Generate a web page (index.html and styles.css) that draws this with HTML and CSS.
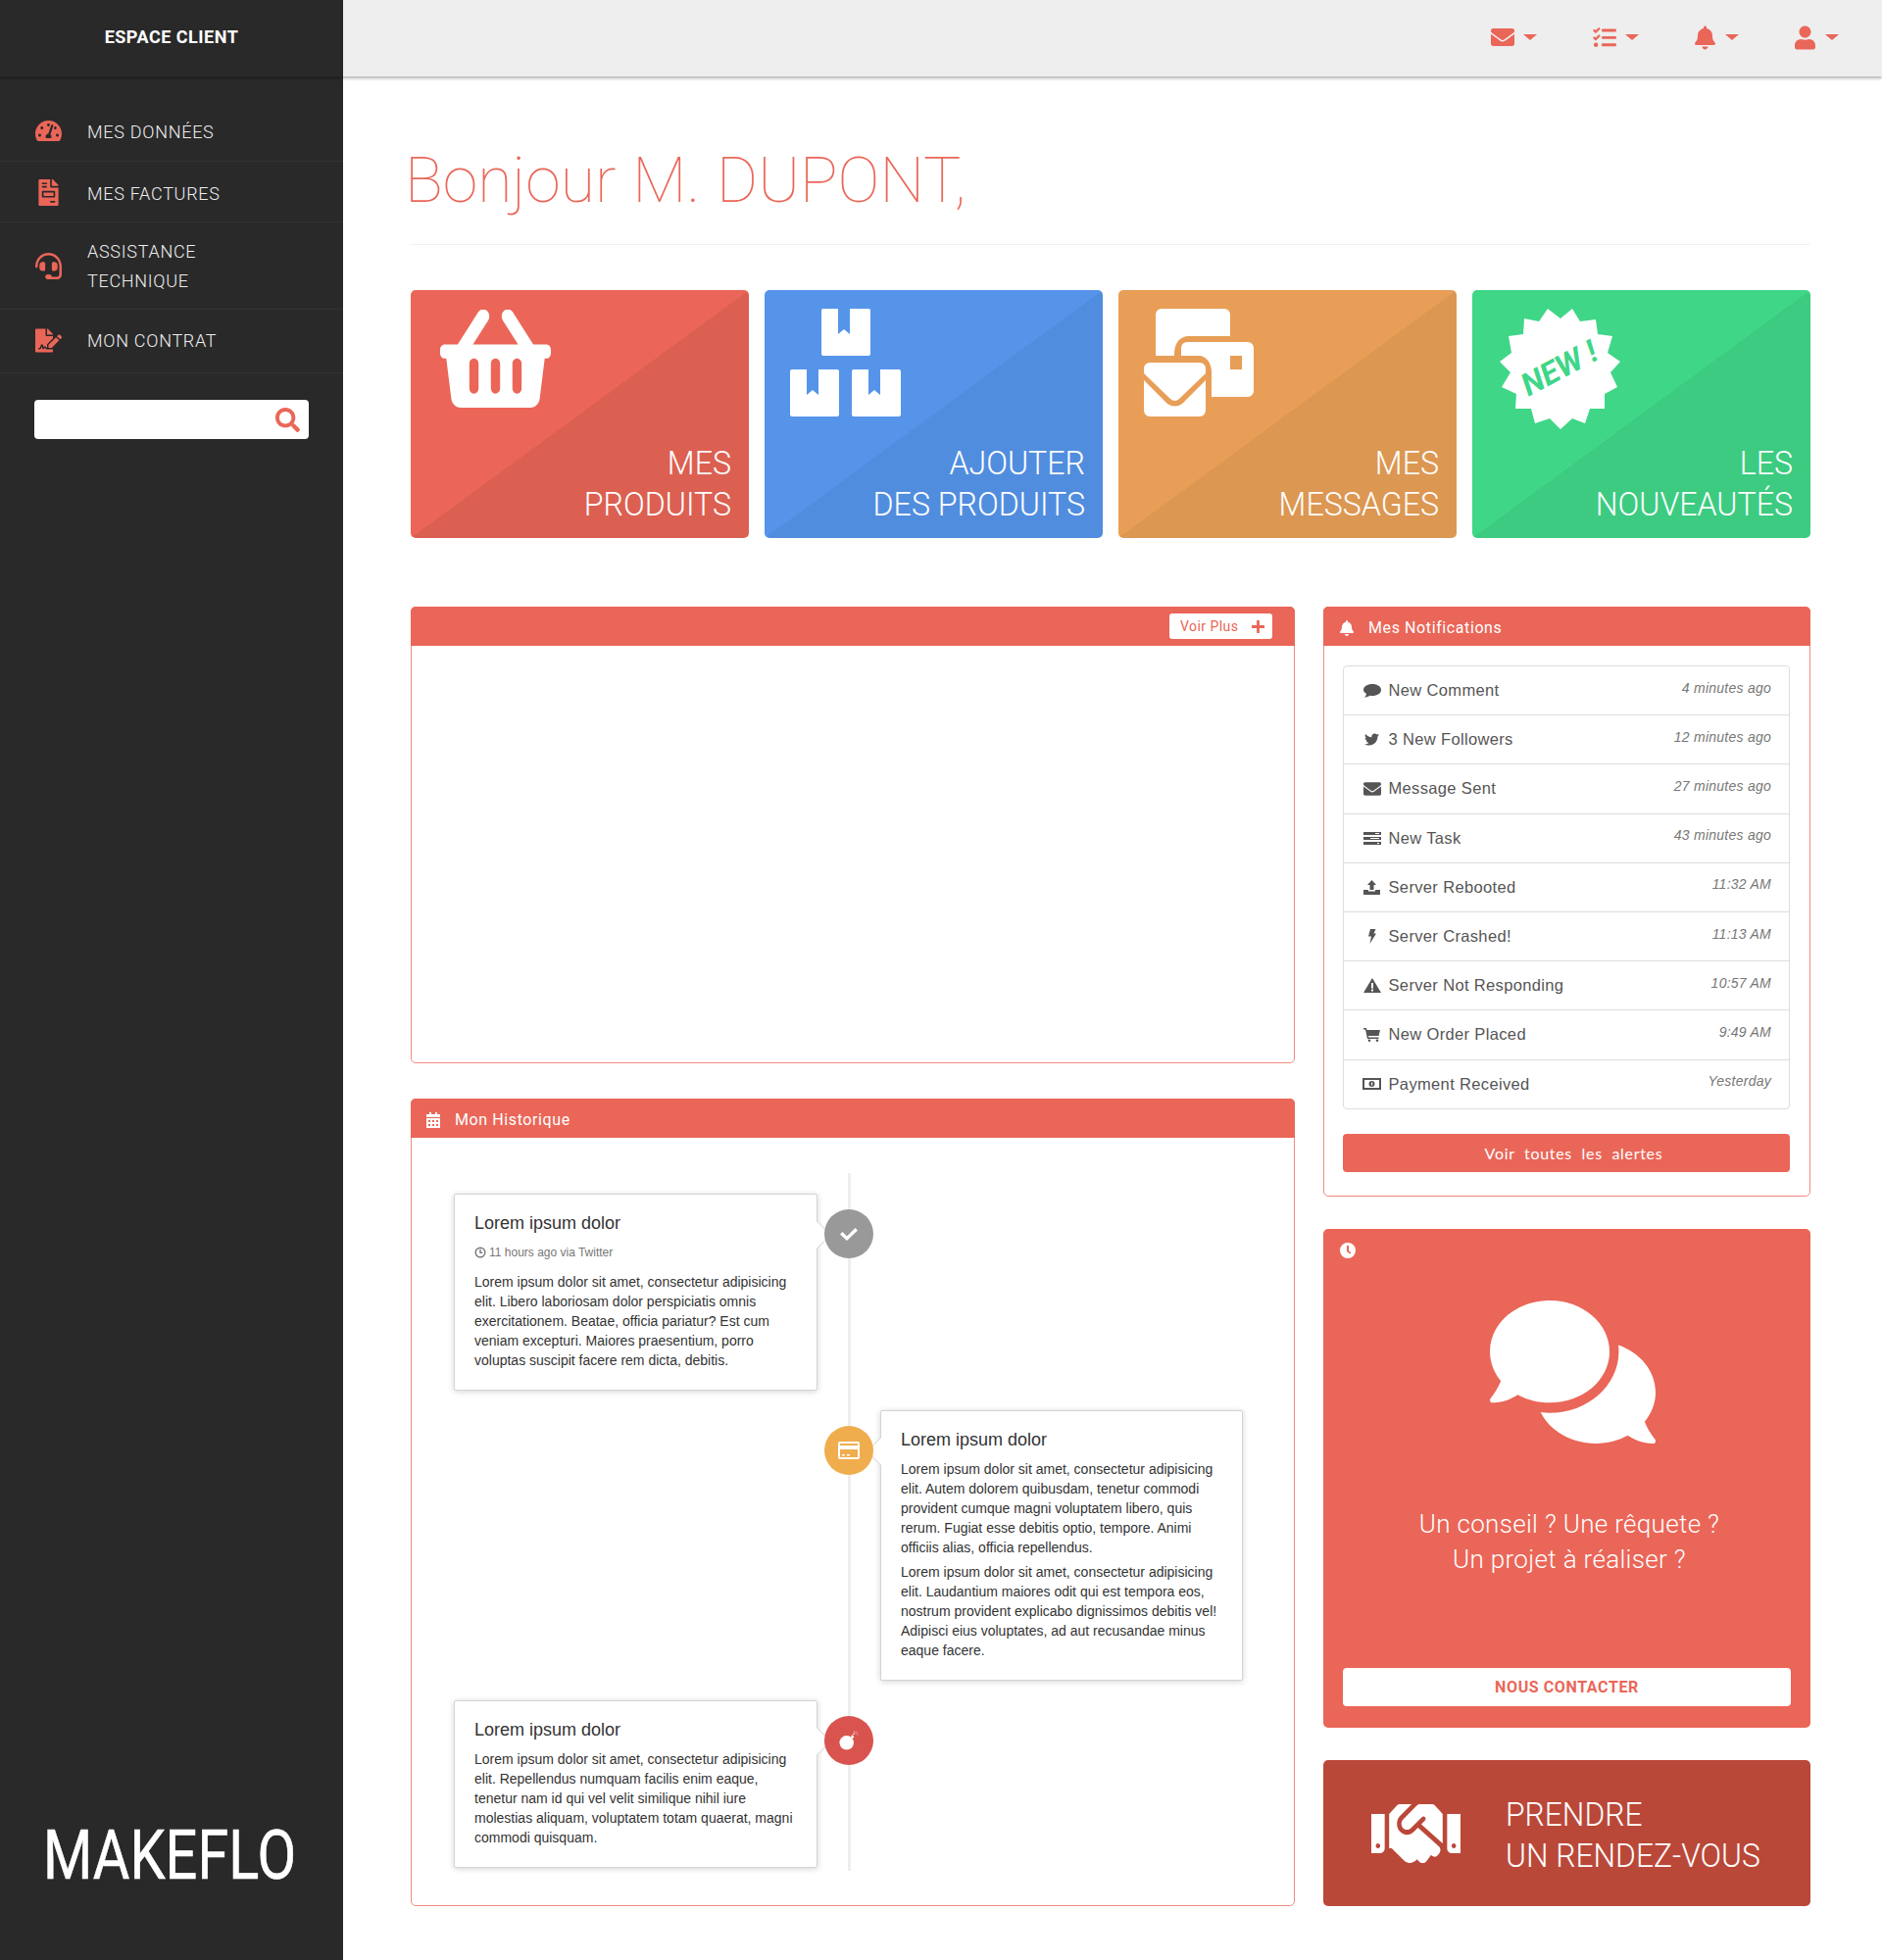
FILE: index.html
```html
<!DOCTYPE html>
<html lang="fr">
<head>
<meta charset="utf-8">
<title>Espace client</title>
<link rel="stylesheet" href="styles.css">
</head>
<body>
<aside class="sidebar">
  <div class="brand">ESPACE CLIENT</div>
  <nav class="nav">
    <a class="nav-item"><svg class="nav-icon" viewBox="0 32 576 448"><path d="M288 32C128.94 32 0 160.94 0 320c0 52.8 14.25 102.26 39.06 144.8 5.61 9.62 16.3 15.2 27.44 15.2h443c11.14 0 21.83-5.58 27.44-15.2C561.75 422.26 576 372.8 576 320c0-159.06-128.94-288-288-288zm0 64c14.71 0 26.58 10.13 30.32 23.65-1.11 2.26-2.64 4.23-3.45 6.67l-9.22 27.67c-5.13 3.49-10.97 6.01-17.64 6.01-17.67 0-32-14.33-32-32S270.33 96 288 96zM96 384c-17.67 0-32-14.33-32-32s14.33-32 32-32 32 14.33 32 32-14.33 32-32 32zm48-160c-17.67 0-32-14.33-32-32s14.33-32 32-32 32 14.33 32 32-14.33 32-32 32zm246.77-72.41l-61.33 184C343.13 347.33 352 364.54 352 384c0 11.72-3.38 22.55-8.88 32H232.88c-5.5-9.45-8.88-20.28-8.88-32 0-33.94 26.5-61.43 59.9-63.59l61.34-184.01c4.17-12.56 17.73-19.45 30.36-15.17 12.57 4.19 19.35 17.79 15.17 30.36zm14.66 57.2l15.52-46.55c3.47-1.29 7.13-2.23 11.05-2.23 17.67 0 32 14.33 32 32s-14.33 32-32 32c-11.38-.01-20.89-6.28-26.57-15.22zM480 384c-17.67 0-32-14.33-32-32s14.33-32 32-32 32 14.33 32 32-14.33 32-32 32z"/></svg><span>MES DONNÉES</span></a>
    <a class="nav-item nav-item-second"><svg class="nav-icon" viewBox="0 0 384 512"><path d="M288 256H96v64h192v-64zm89-151L279.1 7c-4.5-4.5-10.6-7-17-7H256v128h128v-6.1c0-6.3-2.5-12.4-7-16.9zm-153 31V0H24C10.7 0 0 10.7 0 24v464c0 13.3 10.7 24 24 24h336c13.3 0 24-10.7 24-24V160H248c-13.2 0-24-10.8-24-24zM64 72c0-4.42 3.58-8 8-8h80c4.42 0 8 3.58 8 8v16c0 4.42-3.58 8-8 8H72c-4.42 0-8-3.58-8-8V72zm0 64c0-4.42 3.58-8 8-8h80c4.42 0 8 3.58 8 8v16c0 4.42-3.58 8-8 8H72c-4.42 0-8-3.58-8-8v-16zm256 304c0 4.42-3.58 8-8 8h-80c-4.42 0-8-3.58-8-8v-16c0-4.42 3.58-8 8-8h80c4.42 0 8 3.58 8 8v16zm0-200v96c0 8.84-7.16 16-16 16H80c-8.84 0-16-7.16-16-16v-96c0-8.84 7.16-16 16-16h224c8.84 0 16 7.16 16 16z"/></svg><span>MES FACTURES</span></a>
    <a class="nav-item"><svg class="nav-icon" viewBox="0 0 512 512"><path d="M192 208c0-17.67-14.33-32-32-32h-16c-35.35 0-64 28.65-64 64v48c0 35.35 28.65 64 64 64h16c17.67 0 32-14.33 32-32V208zm176 144c35.35 0 64-28.65 64-64v-48c0-35.35-28.65-64-64-64h-16c-17.67 0-32 14.33-32 32v112c0 17.67 14.33 32 32 32h16zM256 0C113.18 0 4.58 118.83 0 256v16c0 8.84 7.16 16 16 16h16c8.84 0 16-7.16 16-16v-16c0-114.69 93.31-208 208-208s208 93.31 208 208h-.12c.08 2.43.12 165.72.12 165.72 0 23.35-18.93 42.28-42.28 42.28H320c0-26.51-21.49-48-48-48h-32c-26.51 0-48 21.49-48 48s21.49 48 48 48h181.72c49.86 0 90.28-40.42 90.28-90.28V256C507.42 118.83 398.82 0 256 0z"/></svg><span>ASSISTANCE<br>TECHNIQUE</span></a>
    <a class="nav-item nav-item-last"><svg class="nav-icon" viewBox="0 0 576 512"><path d="M218.17 424.14c-2.95-5.92-8.09-6.52-10.17-6.52s-7.22.59-10.02 6.19l-7.67 15.34c-6.37 12.78-25.03 11.37-29.48-2.09L144 386.59l-10.61 31.88c-5.89 17.66-22.38 29.53-41 29.53H80c-8.84 0-16-7.16-16-16s7.16-16 16-16h12.39c4.83 0 9.11-3.08 10.64-7.66l18.19-54.64c3.3-9.81 12.44-16.41 22.78-16.41s19.48 6.59 22.77 16.41l13.88 41.64c19.75-16.19 54.06-9.7 66 14.16 1.89 3.78 5.49 5.95 9.36 6.26v-82.12l128-127.09V160H248c-13.2 0-24-10.8-24-24V0H24C10.7 0 0 10.7 0 24v464c0 13.3 10.7 24 24 24h336c13.3 0 24-10.7 24-24v-40l-128-.11c-16.12-.31-30.58-9.28-37.83-23.75zM384 121.9c0-6.3-2.5-12.4-7-16.9L279.1 7c-4.5-4.5-10.6-7-17-7H256v128h128v-6.1zm-96 225.06V416h68.99l161.68-162.78-67.88-67.88L288 346.96zm280.54-179.63l-31.87-31.87c-9.94-9.94-26.07-9.94-36.01 0l-27.25 27.25-.01.01 67.88 67.88 27.25-27.25c9.95-9.95 9.95-26.07.01-36.02z"/></svg><span>MON CONTRAT</span></a>
  </nav>
  <div class="search">
    <svg class="search-icon" viewBox="0 0 512 512"><path d="M505 442.7L405.3 343c-4.5-4.5-10.6-7-17-7H372c27.6-35.3 44-79.7 44-128C416 93.1 322.9 0 208 0S0 93.1 0 208s93.1 208 208 208c48.3 0 92.7-16.4 128-44v16.3c0 6.4 2.5 12.5 7 17l99.7 99.7c9.4 9.4 24.6 9.4 33.9 0l28.3-28.3c9.4-9.4 9.4-24.6.1-34zM208 336c-70.7 0-128-57.2-128-128 0-70.7 57.2-128 128-128 70.7 0 128 57.2 128 128 0 70.7-57.2 128-128 128z"/></svg>
  </div>
  <div class="logo">MAKEFLO</div>
</aside>

<div class="main">
  <header class="topbar">
    <div class="top-item"><svg class="top-icon top-icon-wide" viewBox="0 64 512 384"><path d="M502.3 190.8c3.9-3.1 9.7-.2 9.7 4.7V400c0 26.5-21.5 48-48 48H48c-26.5 0-48-21.5-48-48V195.6c0-5 5.7-7.8 9.7-4.7 22.4 17.4 52.1 39.5 154.1 113.6 21.1 15.4 56.7 47.8 92.2 47.6 35.7.3 72-32.8 92.3-47.6 102-74.1 131.6-96.3 154-113.7zM256 320c23.2.4 56.6-29.2 73.4-41.4 132.7-96.3 142.8-104.7 173.4-128.7 5.8-4.5 9.2-11.5 9.2-18.9v-19c0-26.5-21.5-48-48-48H48C21.5 64 0 85.5 0 112v19c0 7.4 3.4 14.3 9.2 18.9 30.6 23.9 40.7 32.4 173.4 128.7 16.8 12.2 50.2 41.8 73.4 41.4z"/></svg><i class="caret"></i></div>
    <div class="top-item"><svg class="top-icon top-icon-wide" viewBox="0 32 512 432"><path d="M139.61 35.5a12 12 0 0 0-17 0L58.93 98.81l-22.7-22.12a12 12 0 0 0-17 0L3.53 92.41a12 12 0 0 0 0 17l47.59 47.4a12.78 12.78 0 0 0 17.61 0l15.59-15.62L156.52 69a12.09 12.09 0 0 0 .09-17zm0 159.19a12 12 0 0 0-17 0l-63.68 63.72-22.7-22.1a12 12 0 0 0-17 0L3.53 252a12 12 0 0 0 0 17L51 316.5a12.77 12.77 0 0 0 17.6 0l15.7-15.69 72.2-72.22a12 12 0 0 0 .09-16.9zM64 368c-26.49 0-48.59 21.5-48.59 48S37.53 464 64 464a48 48 0 0 0 0-96zm432 16H208a16 16 0 0 0-16 16v32a16 16 0 0 0 16 16h288a16 16 0 0 0 16-16v-32a16 16 0 0 0-16-16zm0-320H208a16 16 0 0 0-16 16v32a16 16 0 0 0 16 16h288a16 16 0 0 0 16-16V80a16 16 0 0 0-16-16zm0 160H208a16 16 0 0 0-16 16v32a16 16 0 0 0 16 16h288a16 16 0 0 0 16-16v-32a16 16 0 0 0-16-16z"/></svg><i class="caret"></i></div>
    <div class="top-item top-item-tall"><svg class="top-icon top-icon-tall" viewBox="0 0 448 512"><path d="M224 512c35.32 0 63.97-28.65 63.97-64H160.03c0 35.35 28.65 64 63.97 64zm215.39-149.71c-19.32-20.76-55.47-51.99-55.47-154.29 0-77.7-54.48-139.9-127.94-155.16V32c0-17.67-14.32-32-31.98-32s-31.98 14.33-31.98 32v20.84C118.56 68.1 64.08 130.3 64.08 208c0 102.3-36.15 133.53-55.47 154.29-6 6.45-8.66 14.16-8.61 21.71.11 16.4 12.98 32 32.1 32h383.8c19.12 0 32-15.6 32.1-32 .05-7.55-2.61-15.27-8.61-21.71z"/></svg><i class="caret"></i></div>
    <div class="top-item top-item-tall"><svg class="top-icon top-icon-tall" viewBox="0 0 448 512"><path d="M224 256c70.7 0 128-57.3 128-128S294.7 0 224 0 96 57.3 96 128s57.3 128 128 128zm89.6 32h-16.7c-22.2 10.2-46.9 16-72.9 16s-50.6-5.8-72.9-16h-16.7C60.2 288 0 348.2 0 422.4V464c0 26.5 21.5 48 48 48h352c26.5 0 48-21.5 48-48v-41.6c0-74.2-60.2-134.4-134.4-134.4z"/></svg><i class="caret"></i></div>
  </header>

  <main class="content">
    <h1 class="greeting">Bonjour M. DUPONT,</h1>

    <section class="tiles">
      <a class="tile tile-red">
        <svg class="tile-icon icon-basket" viewBox="0 34 576 446" preserveAspectRatio="none"><path d="M576 216v16c0 13.255-10.745 24-24 24h-8l-26.113 182.788C514.509 462.435 494.257 480 470.37 480H105.63c-23.887 0-44.139-17.565-47.518-41.212L32 256h-8c-13.255 0-24-10.745-24-24v-16c0-13.255 10.745-24 24-24h67.341l106.78-146.821c10.395-14.292 30.407-17.453 44.701-7.058 14.293 10.395 17.453 30.408 7.058 44.701L170.477 192h235.046L326.12 82.821c-10.395-14.292-7.234-34.306 7.059-44.701 14.291-10.395 34.306-7.235 44.701 7.058L484.659 192H552c13.255 0 24 10.745 24 24zM312 392V280c0-13.255-10.745-24-24-24s-24 10.745-24 24v112c0 13.255 10.745 24 24 24s24-10.745 24-24zm112 0V280c0-13.255-10.745-24-24-24s-24 10.745-24 24v112c0 13.255 10.745 24 24 24s24-10.745 24-24zm-224 0V280c0-13.255-10.745-24-24-24s-24 10.745-24 24v112c0 13.255 10.745 24 24 24s24-10.745 24-24z"/></svg>
        <span class="tile-label">MES<br>PRODUITS</span>
      </a>
      <a class="tile tile-blue">
        <svg class="tile-icon icon-boxes" viewBox="0 0 113 110">
          <path d="M34 0H49V26l6-5 6 5V0H80a2 2 0 0 1 2 2V46a2 2 0 0 1-2 2H34a2 2 0 0 1-2-2V2a2 2 0 0 1 2-2z"/>
          <path d="M2 62H17V88l6-5 6 5V62H48a2 2 0 0 1 2 2V108a2 2 0 0 1-2 2H2a2 2 0 0 1-2-2V64a2 2 0 0 1 2-2z"/>
          <path d="M65 62H80V88l6-5 6 5V62H111a2 2 0 0 1 2 2V108a2 2 0 0 1-2 2H65a2 2 0 0 1-2-2V64a2 2 0 0 1 2-2z"/>
        </svg>
        <span class="tile-label">AJOUTER<br>DES PRODUITS</span>
      </a>
      <a class="tile tile-orange">
        <svg class="tile-icon icon-messages" viewBox="0 0 112 110">
          <path d="M12 6a6 6 0 0 1 6-6h64a6 6 0 0 1 6 6V28H46C36 28 31 36 31 46V48H12Z"/>
          <path fill-rule="evenodd" d="M38 40a6 6 0 0 1 6-6h62a6 6 0 0 1 6 6v44a6 6 0 0 1-6 6H69V64C69 56 64 48 56 48H38ZM88 48v14h12V48Z"/>
          <path d="M0 61a6 6 0 0 1 6-6h51a6 6 0 0 1 6 6v5L36 92q-4.500 4-9 0L0 66Z"/>
          <path d="M0 73 24 97q7.500 5 15 0L63 73V104a6 6 0 0 1-6 6H6a6 6 0 0 1-6-6Z"/>
        </svg>
        <span class="tile-label">MES<br>MESSAGES</span>
      </a>
      <a class="tile tile-green">
        <svg class="tile-icon icon-new" viewBox="0 0 124 124">
          <polygon points="49,0 62,10 74,0 82,13 98,11 100,26 115,28 110,45 123,54 113,65 120,80 107,87 107,102 92,102 87,117 74,112 62,123 51,112 36,117 32,102 16,102 17,87 2,80 11,65 0,54 12,45 9,28 24,26 25,10 40,13"/>
          <text class="new-text" x="61" y="71" text-anchor="middle" transform="rotate(-28 62 61)">NEW !</text>
        </svg>
        <span class="tile-label">LES<br>NOUVEAUTÉS</span>
      </a>
    </section>

    <section class="columns">
      <div class="col">
        <article class="panel panel-chart">
          <header class="panel-head panel-head-end">
            <a class="more">Voir Plus<svg class="more-icon" viewBox="0 0 14 14"><path d="M5.500 0h3v5.500H14v3H8.500V14h-3V8.500H0v-3h5.500z"/></svg></a>
          </header>
        </article>

        <article class="panel">
          <header class="panel-head">
            <svg class="head-icon head-icon-cal" viewBox="0 0 14 16"><path d="M3 0h2v2h4V0h2v2h3v3H0V2h3zM0 6h14v10H0zm2 2v2h2V8zm4 0v2h2V8zm4 0v2h2V8zm-8 4v2h2v-2zm4 0v2h2v-2zm4 0v2h2v-2z" fill-rule="evenodd"/></svg>
            <span>Mon Historique</span>
          </header>
          <div class="timeline-wrap">
            <div class="timeline">
              <div class="event event-left">
                <span class="badge badge-grey"><svg viewBox="0 0 18 14"><path d="M2.500 5 7 9.500 15.500 1 18 3.500 7 14 0 7.500z"/></svg></span>
                <h4 class="event-title">Lorem ipsum dolor</h4>
                <p class="event-meta"><svg class="meta-icon" viewBox="0 0 12 12"><circle cx="6" cy="6" r="4.800"/><path d="M6 2.800V6.400H8.400"/></svg>11 hours ago via Twitter</p>
                <p class="event-text">Lorem ipsum dolor sit amet, consectetur adipisicing elit. Libero laboriosam dolor perspiciatis omnis exercitationem. Beatae, officia pariatur? Est cum veniam excepturi. Maiores praesentium, porro voluptas suscipit facere rem dicta, debitis.</p>
              </div>
              <div class="event event-right">
                <span class="badge badge-orange"><svg viewBox="0 0 22 18"><path fill-rule="evenodd" d="M2 0h18a2 2 0 0 1 2 2v14a2 2 0 0 1-2 2H2a2 2 0 0 1-2-2V2a2 2 0 0 1 2-2zm0 2v2h18V2zm0 6v8h18V8zm2 5h3v1.500H4zm5 0h3v1.500H9z"/></svg></span>
                <h4 class="event-title">Lorem ipsum dolor</h4>
                <p class="event-text">Lorem ipsum dolor sit amet, consectetur adipisicing elit. Autem dolorem quibusdam, tenetur commodi provident cumque magni voluptatem libero, quis rerum. Fugiat esse debitis optio, tempore. Animi officiis alias, officia repellendus.</p>
                <p class="event-text event-text-next">Lorem ipsum dolor sit amet, consectetur adipisicing elit. Laudantium maiores odit qui est tempora eos, nostrum provident explicabo dignissimos debitis vel! Adipisci eius voluptates, ad aut recusandae minus eaque facere.</p>
              </div>
              <div class="event event-left">
                <span class="badge badge-red"><svg viewBox="0 0 22 22"><circle cx="8.500" cy="13.500" r="8"/><path d="M13 7l2-2 2 2-2 2z"/><path class="fuse" d="M15 5q1-2 3-2M19 1l1 1M20 4l1 .5M17 .5v1"/></svg></span>
                <h4 class="event-title">Lorem ipsum dolor</h4>
                <p class="event-text">Lorem ipsum dolor sit amet, consectetur adipisicing elit. Repellendus numquam facilis enim eaque, tenetur nam id qui vel velit similique nihil iure molestias aliquam, voluptatem totam quaerat, magni commodi quisquam.</p>
              </div>
            </div>
          </div>
        </article>
      </div>

      <div class="col col-side">
        <article class="panel">
          <header class="panel-head">
            <svg class="head-icon" viewBox="0 0 448 512"><path d="M224 512c35.32 0 63.97-28.65 63.97-64H160.03c0 35.35 28.65 64 63.97 64zm215.39-149.71c-19.32-20.76-55.47-51.99-55.47-154.29 0-77.7-54.48-139.9-127.94-155.16V32c0-17.67-14.32-32-31.98-32s-31.98 14.33-31.98 32v20.84C118.56 68.1 64.08 130.3 64.08 208c0 102.3-36.15 133.53-55.47 154.29-6 6.45-8.66 14.16-8.61 21.71.11 16.4 12.98 32 32.1 32h383.8c19.12 0 32-15.6 32.1-32 .05-7.55-2.61-15.27-8.61-21.71z"/></svg>
            <span>Mes Notifications</span>
          </header>
          <div class="notif-body">
            <ul class="notifs">
              <li class="notif"><span class="notif-icon"><svg viewBox="0 0 18 15" width="18" height="15"><path d="M9 1c5 0 9 2.500 9 6s-4 6-9 6c-.9 0-1.700-.1-2.500-.2C5 14 3 14.500 1 14.800 2 13.800 2.800 12.500 3 11 1.200 9.900 0 8.500 0 7c0-3.500 4-6 9-6z"/></svg></span><span class="notif-label">New Comment</span><em class="notif-time">4 minutes ago</em></li>
              <li class="notif"><span class="notif-icon"><svg viewBox="0 0 512 512" width="15" height="15"><path d="M459.37 151.716c.325 4.548.325 9.097.325 13.645 0 138.72-105.583 298.558-298.558 298.558-59.452 0-114.68-17.219-161.137-47.106 8.447.974 16.568 1.299 25.34 1.299 49.055 0 94.213-16.568 130.274-44.832-46.132-.975-84.792-31.188-98.112-72.772 6.498.974 12.995 1.624 19.818 1.624 9.421 0 18.843-1.3 27.614-3.573-48.081-9.747-84.143-51.98-84.143-102.985v-1.299c13.969 7.797 30.214 12.67 47.431 13.319-28.264-18.843-46.781-51.005-46.781-87.391 0-19.492 5.197-37.36 14.294-52.954 51.655 63.675 129.3 105.258 216.365 109.807-1.624-7.797-2.599-15.918-2.599-24.04 0-57.828 46.782-104.934 104.934-104.934 30.213 0 57.502 12.67 76.67 33.137 23.715-4.548 46.456-13.32 66.599-25.34-7.798 24.366-24.366 44.833-46.132 57.827 21.117-2.273 41.584-8.122 60.426-16.243-14.292 20.791-32.161 39.308-52.628 54.253z"/></svg></span><span class="notif-label">3 New Followers</span><em class="notif-time">12 minutes ago</em></li>
              <li class="notif"><span class="notif-icon"><svg viewBox="0 64 512 384" width="18" height="14"><path d="M502.3 190.8c3.9-3.1 9.7-.2 9.7 4.7V400c0 26.5-21.500 48-48 48H48c-26.500 0-48-21.500-48-48V195.600c0-5 5.700-7.800 9.700-4.700 22.400 17.400 52.100 39.500 154.100 113.600 21.100 15.400 56.700 47.800 92.200 47.600 35.700.3 72-32.800 92.300-47.600 102-74.100 131.600-96.300 154-113.700zM256 320c23.200.4 56.600-29.200 73.400-41.400 132.700-96.300 142.800-104.700 173.400-128.700 5.800-4.500 9.200-11.500 9.200-18.900v-19c0-26.500-21.500-48-48-48H48C21.500 64 0 85.500 0 112v19c0 7.400 3.400 14.300 9.200 18.900 30.600 23.900 40.700 32.400 173.400 128.700 16.800 12.200 50.200 41.800 73.400 41.400z"/></svg></span><span class="notif-label">Message Sent</span><em class="notif-time">27 minutes ago</em></li>
              <li class="notif"><span class="notif-icon"><svg viewBox="0 0 18 13" width="18" height="13"><path fill-rule="evenodd" d="M0 0h18v3H0zm12 1v1h4V1zM0 5h18v3H0zm7 1v1h9V6zM0 10h18v3H0zm14 1v1h2v-1z"/></svg></span><span class="notif-label">New Task</span><em class="notif-time">43 minutes ago</em></li>
              <li class="notif"><span class="notif-icon"><svg viewBox="0 0 17 15" width="17" height="15"><path d="M8.500 0 13 5H10.500V10h-4V5H4zM0 10h5v1.500h7V10h5v5H0z"/></svg></span><span class="notif-label">Server Rebooted</span><em class="notif-time">11:32 AM</em></li>
              <li class="notif"><span class="notif-icon"><svg viewBox="0 0 8 15" width="8" height="15"><path d="M2 0H7.500L5.500 4.500H8L1.500 15 3 7.500H0z"/></svg></span><span class="notif-label">Server Crashed!</span><em class="notif-time">11:13 AM</em></li>
              <li class="notif"><span class="notif-icon"><svg viewBox="0 0 18 15" width="18" height="15"><path fill-rule="evenodd" d="M9 0 18 15H0zM8 5v5.500h2V5zm0 6.500v2h2v-2z"/></svg></span><span class="notif-label">Server Not Responding</span><em class="notif-time">10:57 AM</em></li>
              <li class="notif"><span class="notif-icon"><svg viewBox="0 0 17 14" width="17" height="14"><path d="M0 0H3L3.500 2H17L15.500 8H5L5.300 9.500H15.500V11H4L2 1.500H0z"/><circle cx="6" cy="12.700" r="1.300"/><circle cx="14" cy="12.700" r="1.300"/></svg></span><span class="notif-label">New Order Placed</span><em class="notif-time">9:49 AM</em></li>
              <li class="notif"><span class="notif-icon"><svg viewBox="0 0 19 12" width="19" height="12"><path fill-rule="evenodd" d="M0 0H19V12H0zM2 2V10H17V2zM9.500 3a3 3 0 1 1 0 6 3 3 0 0 1 0-6zM9 4.500V7.500h1.200V4.500z"/></svg></span><span class="notif-label">Payment Received</span><em class="notif-time">Yesterday</em></li>
            </ul>
            <a class="btn-alerts">Voir  toutes  les  alertes</a>
          </div>
        </article>

        <article class="panel-solid contact">
          <svg class="contact-clock" viewBox="0 0 16 16"><path fill-rule="evenodd" d="M8 0a8 8 0 1 1 0 16A8 8 0 0 1 8 0zM7 3v6l3.500 2.500.9-1.300L9 8.200V3z"/></svg>
          <svg class="contact-chat" viewBox="0 32 576 448" preserveAspectRatio="none"><path d="M416 192c0-88.400-93.100-160-208-160S0 103.600 0 192c0 34.300 14.100 65.900 38 92-13.400 30.200-35.500 54.200-35.800 54.500-2.200 2.300-2.800 5.700-1.500 8.700S4.800 352 8 352c36.600 0 66.900-12.300 88.700-25 32.200 15.700 70.300 25 111.300 25 114.900 0 208-71.600 208-160zm122 220c23.900-26 38-57.700 38-92 0-66.900-53.500-124.200-129.300-148.100.9 6.600 1.300 13.300 1.300 20.100 0 105.900-107.700 192-240 192-10.800 0-21.300-.8-31.700-1.900C207.800 439.600 281.800 480 368 480c41 0 79.100-9.200 111.300-25 21.800 12.700 52.100 25 88.700 25 3.200 0 6.100-1.900 7.300-4.800 1.300-2.900.7-6.300-1.500-8.700-.3-.3-22.400-24.200-35.800-54.500z"/></svg>
          <p class="contact-text">Un conseil ? Une rêquete ?<br>Un projet à réaliser ?</p>
          <a class="btn-contact">NOUS CONTACTER</a>
        </article>

        <a class="panel-solid meeting">
          <svg class="meeting-icon" viewBox="0 64 640 384" preserveAspectRatio="none"><path d="M434.7 64h-85.900c-8 0-15.700 3-21.600 8.400l-98.300 90c-.1.1-.2.3-.3.4-16.600 15.600-16.300 40.500-2.100 56 12.700 13.900 39.400 17.600 56.100 2.700.1-.1.3-.1.4-.2l79.900-73.200c6.500-5.900 16.700-5.500 22.600 1 6 6.500 5.500 16.600-1 22.600l-26.100 23.900L504 313.800c2.900 2.400 5.500 5 7.900 7.700V128l-54.600-54.600c-5.900-6-14.100-9.400-22.600-9.400zM544 128.200v223.900c0 17.700 14.300 32 32 32h64V128.200h-96zm48 223.900c-8.800 0-16-7.200-16-16s7.200-16 16-16 16 7.200 16 16-7.200 16-16 16zM0 384h64c17.700 0 32-14.300 32-32V128.200H0V384zm48-63.900c8.800 0 16 7.200 16 16s-7.200 16-16 16-16-7.200-16-16c0-8.900 7.200-16 16-16zm435.900 18.600L334.600 217.500l-30 27.500c-29.700 27.100-75.200 24.500-101.700-4.400-26.900-29.400-24.800-74.900 4.400-101.700L289.100 64h-83.800c-8.500 0-16.600 3.400-22.600 9.400L128 128v223.900h18.300l90.500 81.900c27.400 22.300 67.700 18.100 90-9.300l.2-.2 17.900 15.500c15.900 13 39.400 10.500 52.300-5.400l31.400-38.600 5.400 4.400c13.700 11.100 33.900 9.100 45-4.700l9.500-11.700c11.200-13.800 9.100-33.900-4.600-45.100z"/></svg>
          <span class="meeting-label">PRENDRE<br>UN RENDEZ-VOUS</span>
        </a>
      </div>
    </section>
  </main>
</div>
</body>
</html>
```

FILE: styles.css
```css
* { box-sizing: border-box; }
html, body { margin: 0; padding: 0; }
body {
  display: flex;
  min-height: 2000px;
  background: #fff;
  font-family: "Liberation Sans", Arial, sans-serif;
  color: #333;
}
a { text-decoration: none; color: inherit; }
p, h1, h4, ul { margin: 0; padding: 0; }
ul { list-style: none; }

.sidebar {
  width: 350px;
  flex: none;
  background: #292929;
  display: flex;
  flex-direction: column;
  font-family: Roboto, sans-serif;
}
.brand {
  height: 78px;
  line-height: 76px;
  text-align: center;
  font-size: 18px;
  font-weight: 700;
  letter-spacing: .5px;
  color: #fff;
  box-shadow: 0 2px 3px rgba(0,0,0,.25);
}
.nav { margin-top: 25px; }
.nav-item {
  display: flex;
  align-items: center;
  min-height: 62px;
  padding: 15px 0 13px;
  border-bottom: 1px solid #333;
  font-size: 18px;
  font-weight: 300;
  line-height: 30px;
  color: #eee;
  letter-spacing: .72px;
}
.nav-item-second { padding: 16px 0 12px; }
.nav-item-last { min-height: 65px; padding: 14px 0; }
.nav-icon {
  width: 27px;
  height: 27px;
  margin: -2px 26px 0 36px;
  fill: #ea6658;
  flex: none;
}
.search {
  display: flex;
  align-items: center;
  justify-content: flex-end;
  width: 280px;
  height: 40px;
  margin: 27px 0 0 35px;
  padding-right: 9px;
  border-radius: 4px;
  background: #fff;
}
.search-icon { width: 25px; height: 25px; fill: #ea6658; }
.logo {
  margin: auto 0 65px 44px;
  font-family: Roboto, sans-serif;
  font-size: 71px;
  line-height: 84px;
  color: #fff;
  white-space: nowrap;
  -webkit-text-stroke: .6px #fff;
  transform: scaleX(.812);
  transform-origin: left center;
}

.main { flex: 1; min-width: 0; }
.topbar {
  height: 78px;
  background: #eee;
  box-shadow: 0 2px 3px rgba(0,0,0,.3);
  display: flex;
  justify-content: flex-end;
  align-items: center;
  gap: 57px;
  padding: 0 44px 2px 0;
}
.top-item { display: flex; align-items: center; gap: 9px; }
.top-item-tall { gap: 10px; }
.top-icon { fill: #ea6658; display: block; }
.top-icon-wide { width: 24px; height: 20px; }
.top-icon-tall { width: 21px; height: 27px; }
.caret {
  width: 0;
  height: 0;
  border-left: 7px solid transparent;
  border-right: 7px solid transparent;
  border-top: 6px solid #ea6658;
}

.content { padding: 67px 73px 0 69px; }
.greeting {
  font-family: Roboto, sans-serif;
  font-size: 64.300px;
  line-height: 78px;
  font-weight: 100;
  color: #ea6658;
  text-indent: -6px;
  word-spacing: 1.500px;
  padding-bottom: 26px;
  border-bottom: 1px solid #f3efef;
}

.tiles {
  display: grid;
  grid-template-columns: repeat(4, 1fr);
  gap: 16px;
  margin-top: 46px;
}
.tile {
  height: 253px;
  border-radius: 5px;
  padding: 19px 18px 14px;
  display: flex;
  flex-direction: column;
  color: #fff;
}
.tile-red { background: linear-gradient(to bottom right, #eb6658 50%, #dc6052 50%); }
.tile-blue { background: linear-gradient(to bottom right, #5694ea 50%, #518dde 50%); }
.tile-orange { background: linear-gradient(to bottom right, #e89e56 50%, #dc9752 50%); }
.tile-green { background: linear-gradient(to bottom right, #3fd688 50%, #3ccb81 50%); }
.tile-icon { fill: #fff; display: block; flex: none; }
.icon-basket { width: 113px; height: 100px; margin: 1px 0 0 12px; }
.icon-boxes { width: 113px; height: 110px; margin-left: 8px; }
.icon-messages { width: 112px; height: 110px; margin-left: 8px; }
.icon-new { width: 124px; height: 124px; margin-left: 10px; }
.new-text {
  font-family: Roboto, sans-serif;
  font-size: 32px;
  font-weight: 700;
  font-style: italic;
  fill: #3fd688;
}
.tile-label {
  margin-top: auto;
  text-align: right;
  font-family: Roboto, sans-serif;
  font-size: 34px;
  line-height: 42px;
  font-weight: 300;
  transform: scaleX(.945);
  transform-origin: right center;
}

.columns {
  display: grid;
  grid-template-columns: 902px 497px;
  gap: 29px;
  margin-top: 70px;
}
.col { display: flex; flex-direction: column; gap: 36px; }
.col-side { gap: 33px; }
.panel {
  border: 1px solid #f08c81;
  border-radius: 5px;
  background: #fff;
}
.panel-chart { height: 466px; }
.panel-head {
  height: 40px;
  margin: -1px -1px 0;
  padding: 3px 23px 0 17px;
  background: #ea6658;
  border-radius: 5px 5px 0 0;
  display: flex;
  align-items: center;
  color: #fff;
  font-family: Roboto, sans-serif;
  font-size: 16px;
  letter-spacing: .6px;
}
.panel-head-end { justify-content: flex-end; padding-top: 0; }
.head-icon { width: 14px; height: 16px; fill: #fff; margin-right: 15px; flex: none; }
.head-icon-cal { margin: 0 15px 0 -1px; }
.more {
  display: flex;
  align-items: center;
  justify-content: space-between;
  width: 105px;
  height: 26px;
  padding: 0 8px 0 11px;
  background: #fff;
  border-radius: 3px;
  color: #ea6658;
  font-size: 14px;
  font-weight: 400;
  letter-spacing: .45px;
}
.more-icon { width: 13px; height: 13px; fill: #ea6658; }

.timeline-wrap { padding: 36px 44px 35px 43px; }
.timeline {
  position: relative;
  display: flex;
  flex-direction: column;
  gap: 20px;
  padding: 21px 8px 3px 0;
}
.timeline::before {
  content: "";
  position: absolute;
  top: 0;
  bottom: 0;
  left: 402px;
  width: 3px;
  background: #eee;
}
.event {
  position: relative;
  width: 371px;
  padding: 20px;
  background: #fff;
  border: 1px solid #d4d4d4;
  border-radius: 2px;
  box-shadow: 0 1px 6px rgba(0,0,0,.175);
}
.event-right { align-self: flex-end; width: 370px; }
.event::before, .event::after {
  content: "";
  position: absolute;
  width: 0;
  height: 0;
  border-style: solid;
  border-color: transparent;
}
.event-left::before {
  top: 26px; right: -15px;
  border-width: 15px 0 15px 15px;
  border-left-color: #ccc;
}
.event-left::after {
  top: 27px; right: -14px;
  border-width: 14px 0 14px 14px;
  border-left-color: #fff;
}
.event-right::before {
  top: 26px; left: -15px;
  border-width: 15px 15px 15px 0;
  border-right-color: #ccc;
}
.event-right::after {
  top: 27px; left: -14px;
  border-width: 14px 14px 14px 0;
  border-right-color: #fff;
}
.badge {
  position: absolute;
  z-index: 2;
  top: 15px;
  width: 50px;
  height: 50px;
  border-radius: 50%;
  display: flex;
  align-items: center;
  justify-content: center;
}
.event-left .badge { right: -58px; }
.event-right .badge { left: -58px; }
.badge svg { fill: #fff; }
.badge-grey { background: #999; }
.badge-grey svg { width: 18px; height: 14px; }
.badge-orange { background: #f0ad4e; }
.badge-orange svg { width: 22px; height: 18px; }
.badge-red { background: #d9534f; }
.badge-red svg { width: 20px; height: 20px; }
.fuse { fill: none; stroke: #fff; stroke-width: 1; }
.event-title {
  font-size: 18px;
  line-height: 20px;
  font-weight: 400;
  margin: -1px 0 10px;
  color: #333;
}
.event-meta {
  display: flex;
  align-items: center;
  height: 20px;
  margin: 1px 0 10px;
  font-size: 12px;
  color: #777;
}
.meta-icon {
  width: 12px;
  height: 12px;
  margin-right: 3px;
  fill: none;
  stroke: #777;
  stroke-width: 1.400;
}
.event-text { font-size: 14px; line-height: 20px; color: #333; }
.event-text-next { margin-top: 5px; }

.notif-body { padding: 20px 20px 24px 19px; }
.notifs { border: 1px solid #ddd; border-radius: 4px; }
.notif {
  display: flex;
  align-items: center;
  gap: 6px;
  height: 50.200px;
  padding: 0 18px 0 17.500px;
  border-bottom: 1px solid #ddd;
  color: #555;
  font-size: 16.500px;
  letter-spacing: .35px;
}
.notif:last-child { border-bottom: 0; height: 49.500px; }
.notif-icon {
  width: 22px;
  display: flex;
  justify-content: center;
  align-items: center;
  flex: none;
}
.notif-icon svg { fill: #555; }
.notif-time {
  margin-left: auto;
  font-size: 14px;
  color: #777;
  letter-spacing: .25px;
  position: relative;
  top: -3px;
}
.btn-alerts {
  display: block;
  height: 39px;
  margin-top: 25px;
  padding-left: 15px;
  border-radius: 4px;
  background: #ea6658;
  color: #fff;
  text-align: center;
  white-space: pre;
  font-family: Lato, sans-serif;
  font-size: 16px;
  line-height: 39px;
  letter-spacing: .7px;
}

.panel-solid {
  display: flex;
  border-radius: 5px;
  color: #fff;
}
.contact {
  height: 509px;
  flex-direction: column;
  padding: 14px 20px 22px;
  background: #ea6658;
  font-family: Roboto, sans-serif;
}
.contact-clock { width: 16px; height: 16px; margin-left: -3px; fill: #fff; flex: none; }
.contact-chat { width: 169px; height: 146px; margin: 43px 0 0 150px; fill: #fff; flex: none; }
.contact-text {
  margin-top: 64px;
  padding-left: 5px;
  text-align: center;
  font-size: 26px;
  line-height: 36px;
  font-weight: 300;
  letter-spacing: .32px;
}
.btn-contact {
  display: block;
  margin-top: auto;
  height: 39px;
  line-height: 40px;
  background: #fff;
  border-radius: 4px;
  text-align: center;
  color: #ea6658;
  font-size: 16px;
  font-weight: 700;
  letter-spacing: .6px;
}
.meeting {
  height: 149px;
  align-items: center;
  background: #ba4839;
  font-family: Roboto, sans-serif;
}
.meeting-icon { width: 91px; height: 60px; margin-left: 49px; fill: #fff; flex: none; }
.meeting-label {
  margin-left: 46px;
  padding-top: 2px;
  font-size: 34px;
  line-height: 42px;
  font-weight: 300;
  transform: scaleX(.935);
  transform-origin: left center;
}
```
